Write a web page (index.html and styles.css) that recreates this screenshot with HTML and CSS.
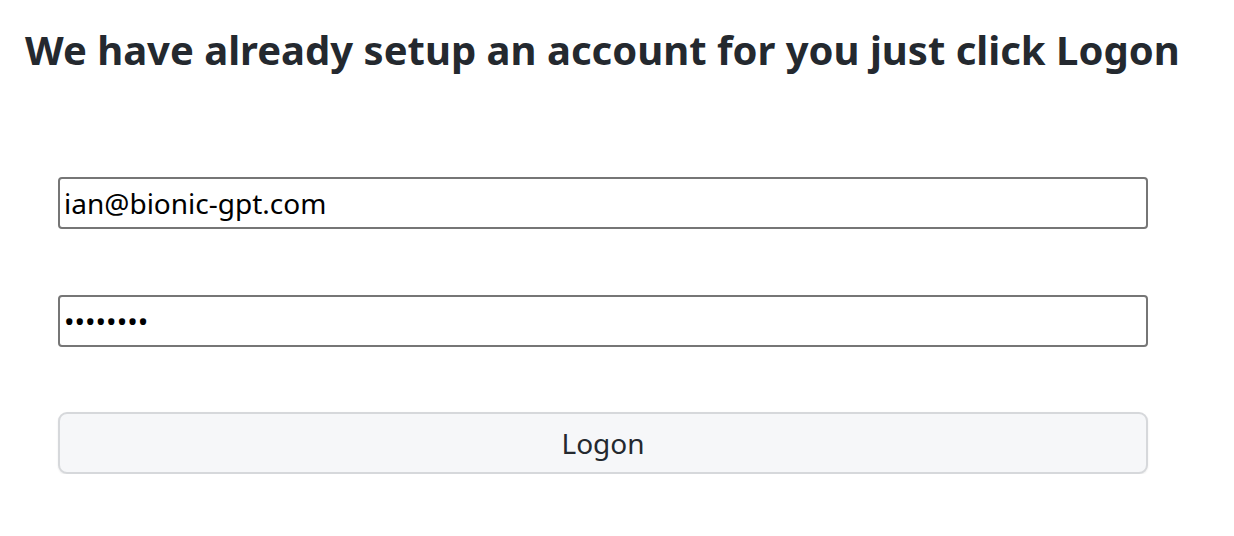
FILE: index.html
```html
<!DOCTYPE html>
<html lang="en">
<head>
<meta charset="utf-8">
<link rel="stylesheet" href="styles.css">
<title>Logon</title>
</head>
<body>
<main class="page">
  <h1 class="title">We have already setup an account for you just click Logon</h1>
  <form class="form">
    <input class="field" type="email" value="ian@bionic-gpt.com">
    <input class="field" type="password" value="password">
    <button class="btn" type="button">Logon</button>
  </form>
</main>
</body>
</html>
```
FILE: styles.css
```css
html, body {
  margin: 0;
  padding: 0;
  background: #ffffff;
}
body {
  font-family: "Noto Sans", "Open Sans", sans-serif;
  color: #212529;
}
.page {
  padding: 25px 0 0 25px;
}
.title {
  margin: 0;
  font-size: 40px;
  font-weight: 700;
  line-height: 50px;
  color: #24292f;
}
.form {
  display: flex;
  flex-direction: column;
  gap: 66px;
  width: 1090px;
  margin: 102px 0 0 33px;
}
.field {
  box-sizing: border-box;
  height: 52px;
  width: 100%;
  margin: 0;
  padding: 0 4px;
  border: 2px solid #767676;
  border-radius: 4px;
  font-family: "Noto Sans", sans-serif;
  font-size: 28px;
  color: #000;
  background: #fff;
}
.btn {
  box-sizing: border-box;
  height: 62px;
  width: 100%;
  margin-top: -1px;
  border: 2px solid #d6d8db;
  border-radius: 9px;
  background: #f6f7f9;
  box-shadow: 0 1px 2px rgba(0,0,0,0.08);
  font-family: "Noto Sans", sans-serif;
  font-size: 28px;
  color: #24292f;
}
```
